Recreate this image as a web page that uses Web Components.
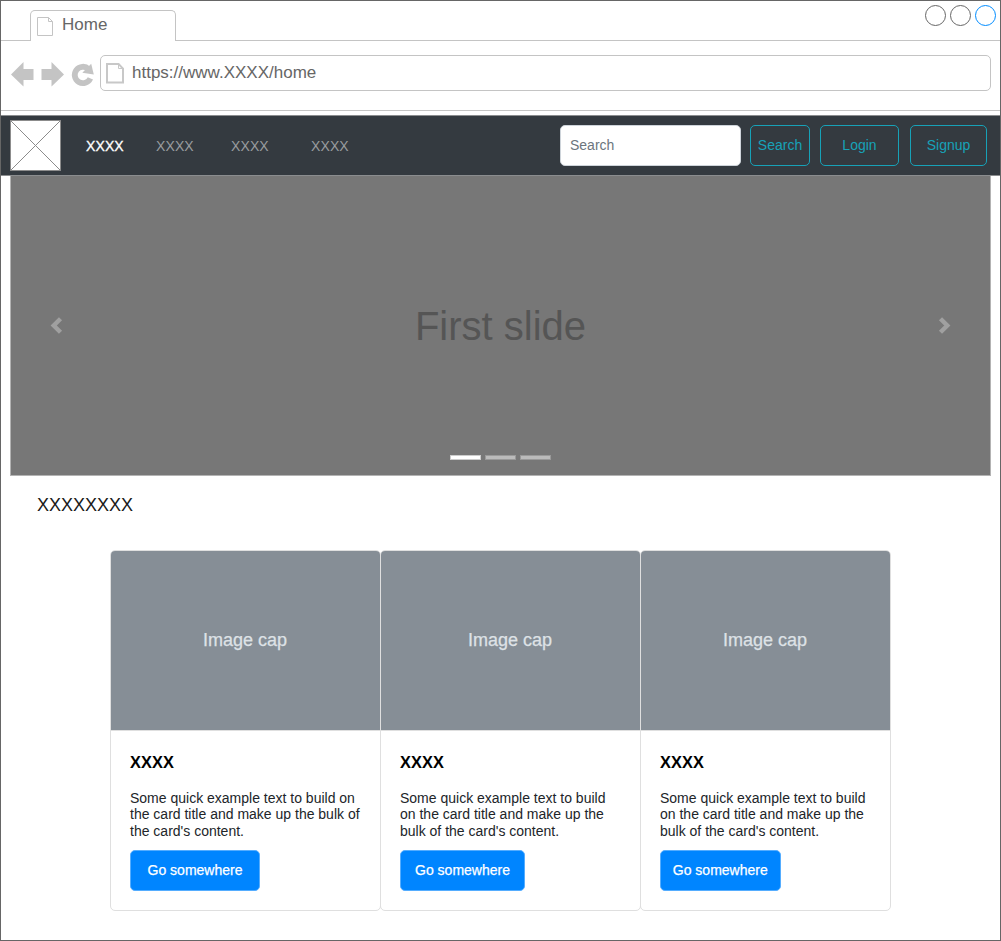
<!DOCTYPE html>
<html lang="en">
<head>
<meta charset="utf-8">
<title>Home</title>
<style>
html,body{margin:0;padding:0;background:#fff}
body{font-family:"Liberation Sans",Arial,sans-serif;font-size:14px}
</style>
</head>
<body>
<browser-window heading="Home" address="https://www.XXXX/home">
  <site-nav>
    <nav-item active style="width:70px">XXXX</nav-item>
    <nav-item style="width:75px">XXXX</nav-item>
    <nav-item style="width:80px">XXXX</nav-item>
    <nav-item>XXXX</nav-item>
    <search-field slot="actions">Search</search-field>
    <outline-button slot="actions" style="width:60px;margin-left:9px">Search</outline-button>
    <outline-button slot="actions" style="width:79px;margin-left:10px">Login</outline-button>
    <outline-button slot="actions" style="width:77px;margin-left:11px">Signup</outline-button>
  </site-nav>
  <image-carousel>First slide</image-carousel>
  <section-title>XXXXXXXX</section-title>
  <card-group>
    <info-card style="width:271px;--action:130px"><span slot="title">XXXX</span>Some quick example text to build on the card title and make up the bulk of the card's content.</info-card>
    <info-card style="width:261px;--action:125px"><span slot="title">XXXX</span>Some quick example text to build on the card title and make up the bulk of the card's content.</info-card>
    <info-card style="width:251px;--action:120.5px"><span slot="title">XXXX</span>Some quick example text to build on the card title and make up the bulk of the card's content.</info-card>
  </card-group>
</browser-window>
<script>
const define = (name, html) => {
  const t = document.createElement('template');
  t.innerHTML = html;
  customElements.define(name, class extends HTMLElement {
    constructor() {
      super();
      this.attachShadow({mode: 'open'}).append(t.content.cloneNode(true));
    }
    connectedCallback() {
      this.shadowRoot.querySelectorAll('[data-attr]').forEach(e => {
        e.textContent = this.getAttribute(e.dataset.attr);
      });
    }
  });
};

define('browser-window', `<style>
:host{display:flex;flex-direction:column;box-sizing:border-box;width:1001px;height:941px;border:1px solid #666;background:#fff;color:#666;font-size:17px;overflow:hidden}
svg{display:block;flex:none}
.strip{display:flex;height:40px;flex:none}
.lead{width:29px;box-sizing:border-box;border-bottom:1px solid #c4c4c4}
.tab{box-sizing:border-box;width:146px;height:31px;margin-top:9px;border:1px solid #c4c4c4;border-bottom:0;border-radius:5px 5px 0 0;display:flex;padding-left:6px}
.tab svg{margin-top:6px}
.tab span{margin-left:8px;line-height:27px}
.rest{flex:1;box-sizing:border-box;border-bottom:1px solid #c4c4c4;display:flex;justify-content:flex-end;gap:4px;padding:4px 4px 0}
.dot{box-sizing:border-box;width:21px;height:21px;border:1px solid #666;border-radius:50%}
.dot.on{border-color:#008cff}
.bar{display:flex;box-sizing:border-box;height:70px;flex:none;border-bottom:1px solid #c4c4c4;padding:14px 9px 0 10px}
.tools{width:89px;flex:none}
.url{flex:1;box-sizing:border-box;height:36px;border:1px solid #c4c4c4;border-radius:5px;display:flex;padding-left:5px}
.url svg{margin-top:7px}
.url span{margin-left:7px;line-height:33px}
</style>
<div class="strip"><div class="lead"></div>
<div class="tab"><svg width="17" height="19" viewBox="0 0 17 19" fill="none" stroke="#c4c4c4"><path d="M.5.5H11.5L15.5 4.5V18.5H.5ZM11.5.5V4.5H15.5"/></svg><span data-attr="heading"></span></div>
<div class="rest"><div class="dot"></div><div class="dot"></div><div class="dot on"></div></div></div>
<div class="bar"><div class="tools"><svg width="84" height="36" viewBox="0 0 84 36" fill="#c4c4c4"><path d="M0 19.5 12.5 7V14H22.5V25H12.5V31.5ZM53 19.5 40.5 7V14H30.5V25H40.5V31.5Z"/><path d="M77.6 14A8.2 8.2 0 1 0 79.4 23.4" fill="none" stroke="#c4c4c4" stroke-width="5.8"/><path d="M80.2 8.7 82.8 19.4 71.3 17.8Z"/></svg></div>
<div class="url"><svg width="19" height="21" viewBox="0 0 19 21" fill="none" stroke="#c8c8c8"><path d="M1 1H12.6L17 5.6V19.5H1Z" stroke-width="2"/><path d="M12.5 1V5.5H17"/></svg><span data-attr="address"></span></div></div>
<slot></slot>`);

define('site-nav', `<style>
:host{display:flex;box-sizing:border-box;height:61px;flex:none;margin-top:4px;background:#343a40;border:solid #8b8d8f;border-width:1px 0;padding:0 13px 0 9px;font-size:14px}
svg{display:block;margin-top:4px;flex:none}
.links{display:flex;margin-left:25px}
.actions{display:flex;margin-left:auto;padding-top:9px}
</style>
<svg width="51" height="51" viewBox="0 0 51 51"><path d="M.5.5H50.5V50.5H.5ZM.5.5 50.5 50.5M50.5.5.5 50.5" fill="#fff" stroke="#8c8c8c"/></svg>
<div class="links"><slot></slot></div><div class="actions"><slot name="actions"></slot></div>`);

define('nav-item', `<style>
:host{display:block;line-height:60px;color:#999c9f;letter-spacing:.1px}
:host([active]){color:#fff;-webkit-text-stroke:.3px #fff}
</style><slot></slot>`);

define('search-field', `<style>
:host{display:block;box-sizing:border-box;width:181px;height:41px;border:1px solid #ced4da;border-radius:5px;background:#fff;color:#6c757d;line-height:39px;padding-left:9px}
</style><slot></slot>`);

define('outline-button', `<style>
:host{display:block;box-sizing:border-box;height:41px;border:1px solid #17a2b8;border-radius:5px;color:#17a2b8;line-height:39px;text-align:center}
</style><slot></slot>`);

define('image-carousel', `<style>
:host{display:flex;flex-direction:column;box-sizing:border-box;flex:none;width:981px;height:300px;margin-left:9px;background:#777;border:1px solid #b3b3b3;border-top:0;color:#555;font-size:40px}
.stage{display:flex;align-items:center;justify-content:space-between;height:299px;padding:0 39px}
.stage span{line-height:46px}
.marks{display:flex;justify-content:center;gap:4px;height:20px;margin-top:-20px}
.marks i{box-sizing:border-box;width:31px;height:5px;background:#bbb;border:1px solid #999}
.marks .on{background:#fff;border-color:#ccc}
</style>
<div class="stage"><svg width="13" height="17" viewBox="0 0 13 17"><path d="M10.5 1.7 3.7 8.5 10.5 15.3" fill="none" stroke="#a0a0a0" stroke-width="4.4"/></svg>
<span><slot></slot></span>
<svg width="13" height="17" viewBox="0 0 13 17"><path d="M2.5 1.7 9.3 8.5 2.5 15.3" fill="none" stroke="#a0a0a0" stroke-width="4.4"/></svg></div>
<div class="marks"><i class="on"></i><i></i><i></i></div>`);

define('section-title', `<style>
:host{display:block;flex:none;height:74px;box-sizing:border-box;padding:19px 0 0 36px;font-size:18px;line-height:21px;color:#1a1a1a}
</style><slot></slot>`);

define('card-group', `<style>
:host{display:flex;padding-left:109px}
::slotted(*){margin-right:-1px}
</style><slot></slot>`);

define('info-card', `<style>
:host{display:block;box-sizing:border-box;flex:none;height:361px;border:1px solid #dfdfdf;border-radius:5px;font-size:14px;color:#212529}
.cap{height:179px;background:#868e96;color:#dee2e6;border-bottom:1px solid #dfdfdf;border-radius:4px 4px 0 0;font-size:18px;line-height:178px;text-align:center;padding-right:1px;-webkit-text-stroke:.25px #dee2e6}
.body{padding:0 18px 0 19px}
h3{margin:0;padding-top:22px;font-size:16.38px;line-height:19px;color:#000;letter-spacing:.1px}
p{margin:18px 0 0;height:50px;line-height:16.4px}
.go{box-sizing:border-box;width:var(--action);height:41px;margin-top:10px;border:1px solid #55adff;border-radius:5px;background:#0085ff;color:#fff;line-height:39px;text-align:center;-webkit-text-stroke:.25px #fff}
</style>
<div class="cap">Image cap</div>
<div class="body"><h3><slot name="title"></slot></h3><p><slot></slot></p><div class="go">Go somewhere</div></div>`);
</script>
</body>
</html>
